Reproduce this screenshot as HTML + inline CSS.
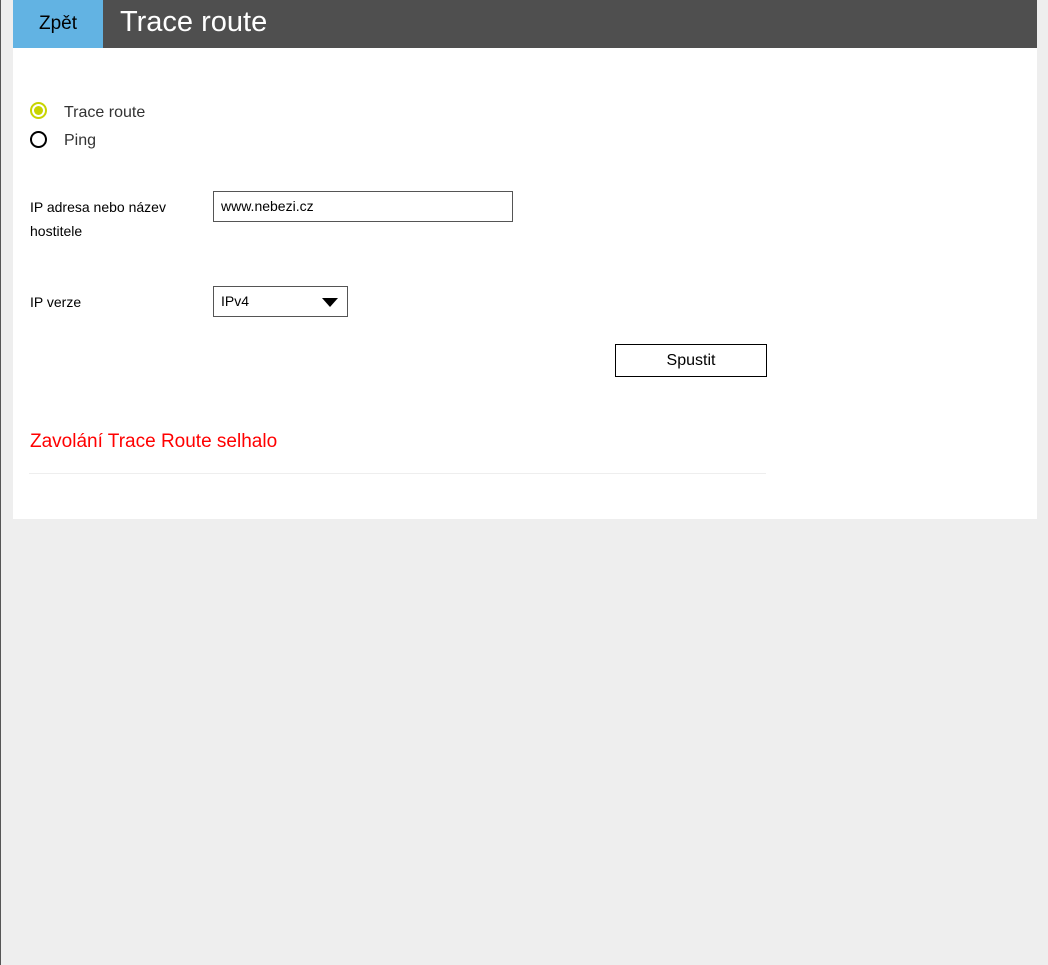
<!DOCTYPE html>
<html><head><meta charset="utf-8"><style>
*{margin:0;padding:0;box-sizing:border-box}
body{width:1048px;height:965px;background:#eeeeee;font-family:"Liberation Sans",Arial,sans-serif;position:relative;overflow:hidden}
.lb{position:absolute;left:0;top:0;width:1px;height:965px;background:#555}
.hdr{position:absolute;left:13px;top:0;width:1024px;height:48px;background:#4f4f4f}
.back{position:absolute;left:13px;top:0;width:90px;height:48px;background:#62b3e3;color:#000;font-size:19px;line-height:48px;text-align:center}
.title{position:absolute;left:120px;top:0;line-height:44px;color:#fff;font-size:29px}
.panel{position:absolute;left:13px;top:48px;width:1024px;height:471px;background:#fff}
.a{position:absolute}
.lbl{font-size:14px;color:#000;line-height:24px}
.radio{font-size:16px;color:#333}
</style></head><body>
<div class="lb"></div>
<div class="hdr"></div>
<div class="back">Zpět</div>
<div class="title">Trace route</div>
<div class="panel"></div>
<div class="a" style="left:30px;top:102px;width:17px;height:17px;border:2px solid #c8d400;border-radius:50%"><div style="position:absolute;left:2px;top:2px;width:9px;height:9px;border-radius:50%;background:#c8d400"></div></div>
<div class="a radio" style="left:64px;top:104px">Trace route</div>
<div class="a" style="left:30px;top:131px;width:17px;height:17px;border:2px solid #000;border-radius:50%"></div>
<div class="a radio" style="left:64px;top:132px">Ping</div>
<div class="a lbl" style="left:30px;top:195px">IP adresa nebo název<br>hostitele</div>
<div class="a" style="left:213px;top:191px;width:300px;height:31px;border:1px solid #555;font-size:14px;line-height:29px;padding-left:7px">www.nebezi.cz</div>
<div class="a lbl" style="left:30px;top:290px">IP verze</div>
<div class="a" style="left:213px;top:286px;width:135px;height:31px;border:1px solid #555;font-size:14px;line-height:28px;padding-left:7px">IPv4
<div style="position:absolute;right:9px;top:11px;width:0;height:0;border-left:8px solid transparent;border-right:8px solid transparent;border-top:9px solid #000"></div></div>
<div class="a" style="left:615px;top:344px;width:152px;height:33px;border:1px solid #000;font-size:16px;line-height:31px;text-align:center">Spustit</div>
<div class="a" style="left:30px;top:431px;color:#ff0000;font-size:19px">Zavolání Trace Route selhalo</div>
<div class="a" style="left:29px;top:473px;width:737px;height:1px;background:#eeeeee"></div>
</body></html>
